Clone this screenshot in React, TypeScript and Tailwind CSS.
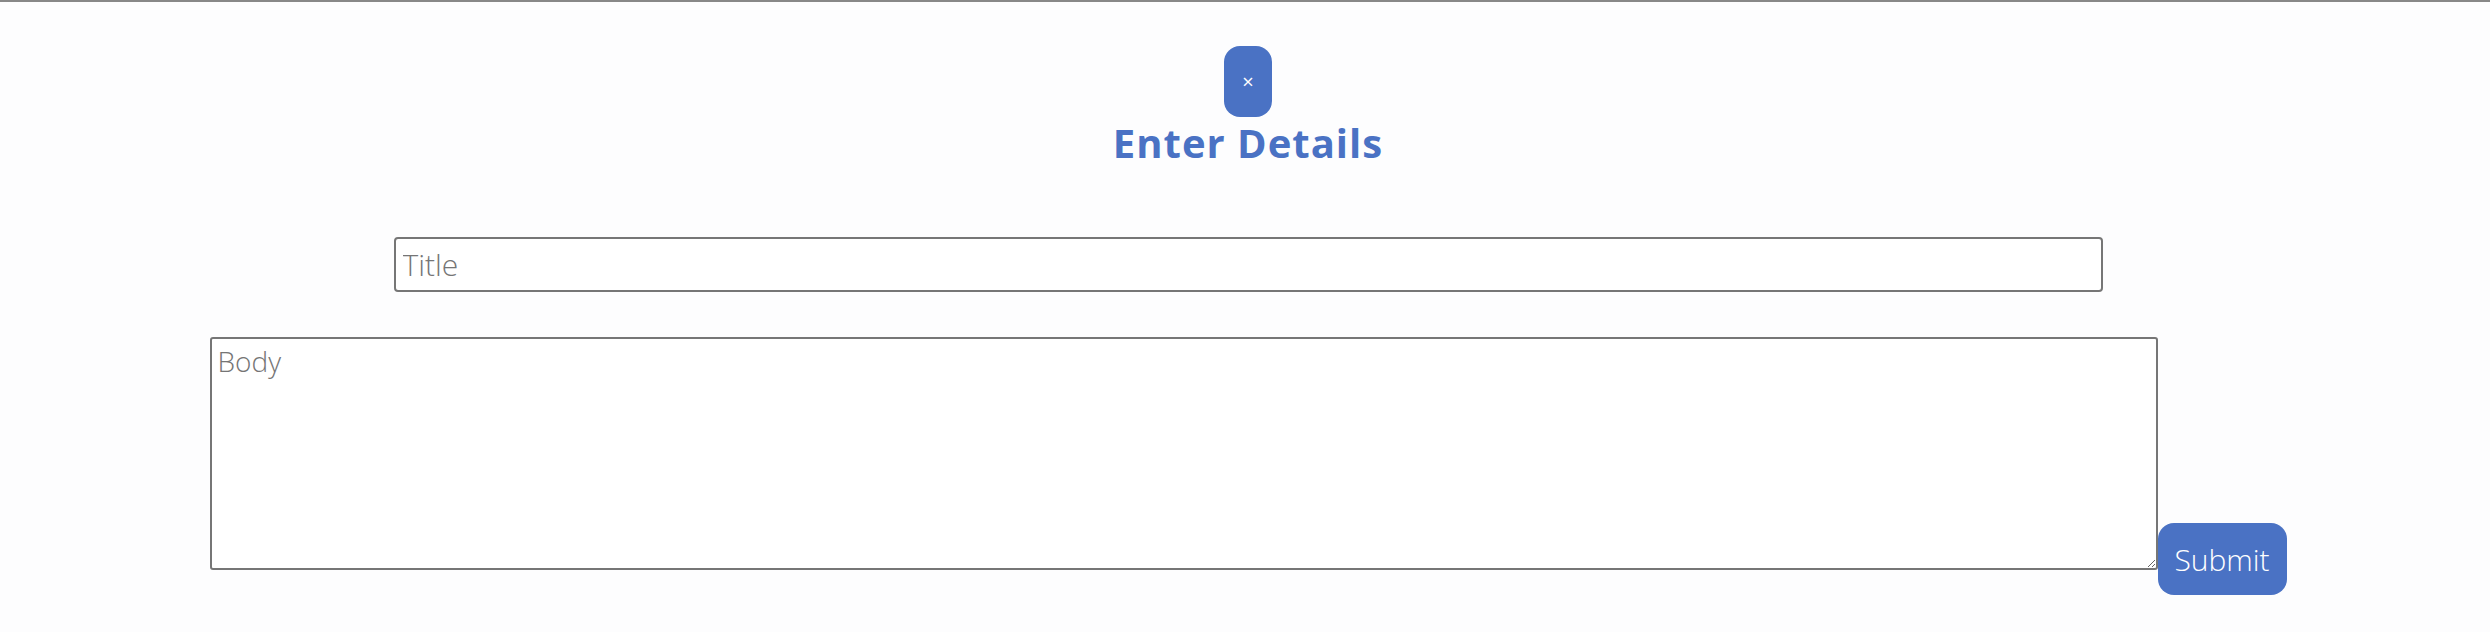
export default function App() {
  return (
    <div className="min-h-[632px] w-full border-t-2 border-[#888888] bg-[#fdfdfe] font-['Open_Sans',sans-serif]">
      <div className="flex flex-col items-center pt-[44px] pl-[6px]">
        <button
          type="button"
          className="flex h-[71px] w-[48px] items-center justify-center rounded-[16px] bg-[#4a72c4] text-[20px] text-white"
        >
          ×
        </button>
        <h1 className="mt-[2px] text-[40px] font-bold leading-[48px] tracking-[1px] text-[#4a72c4]">Enter Details</h1>
        <input
          type="text"
          placeholder="Title"
          className="mt-[70px] h-[55px] w-[1709px] rounded-[4px] border-2 border-[#767676] bg-white px-[7px] text-[30px] font-light text-[#555] placeholder:text-[#757575] outline-none"
        />
        <div className="mt-[45px] flex items-end">
          <textarea
            placeholder="Body"
            className="h-[233px] w-[1948px] rounded-[3px] border-2 border-[#767676] bg-white px-[6px] py-[1px] text-[28px] font-light text-[#555] placeholder:text-[#757575] outline-none"
          />
          <button
            type="button"
            className="-mb-[25px] h-[72px] w-[129px] rounded-[16px] bg-[#4a72c4] text-[30px] font-light text-white"
          >
            Submit
          </button>
        </div>
      </div>
    </div>
  );
}
